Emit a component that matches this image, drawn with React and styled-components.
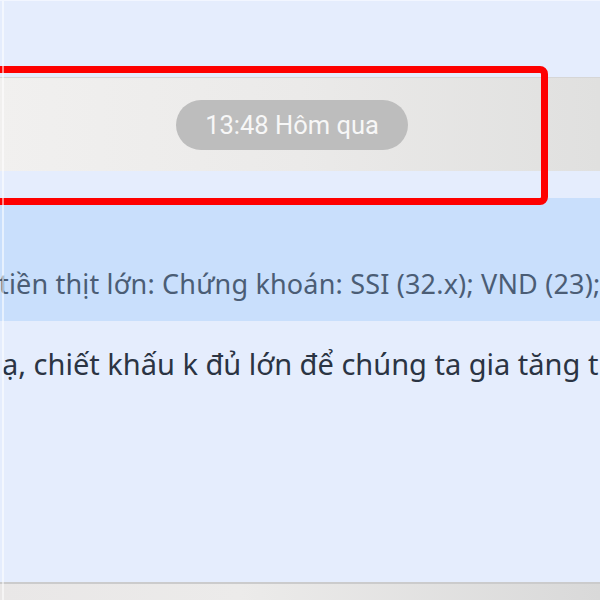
import React from 'react';
import styled, {createGlobalStyle} from 'styled-components';

const GlobalStyle = createGlobalStyle`
  html, body {
    margin: 0;
    padding: 0;
    background: #e5edfd;
  }
`

const Page = styled.div`
  position: relative;
  width: 600px;
  height: 600px;
  overflow: hidden;
  display: flex;
  flex-direction: column;
  background: #e5edfd;
  border-top: 1px solid #f2f6ff;
  box-sizing: border-box;

  &::after {
    content: '';
    position: absolute;
    top: 0;
    bottom: 0;
    left: 2px;
    width: 2px;
    background: rgba(255, 255, 255, 0.55);
  }
`

const TimeStrip = styled.div`
  margin-top: 76px;
  height: 93px;
  display: flex;
  align-items: center;
  justify-content: center;
  padding-right: 16px;
  border-top: 1px solid #d6d6d6;
  background: linear-gradient(to right, #f1f0ef 0%, #ebeae9 50%, #e0e0df 100%);
`

const TimePill = styled.div`
  height: 50px;
  padding: 0 29px;
  border-radius: 25px;
  background: #bdbdbd;
  color: #f7f7f7;
  font-family: Roboto, "Liberation Sans", sans-serif;
  font-size: 25.5px;
  line-height: 50px;
`

const QuoteBand = styled.div`
  margin-top: 27px;
  height: 123px;
  display: flex;
  align-items: flex-end;
  padding-bottom: 19px;
  box-sizing: border-box;
  background: #c9dffc;
`

const Line = styled.div`
  white-space: nowrap;
  font-family: "Noto Sans", "Open Sans", sans-serif;
  font-size: ${props => props.size}px;
  letter-spacing: ${props => props.spacing || 0}px;
  color: ${props => props.tone === 'quote' ? '#4b5d75' : '#2b3443'};
  margin-left: ${props => props.shift}px;
`

const MessageRow = styled.div`
  padding-top: 23px;
  flex: 1;
`

const BottomBar = styled.div`
  height: 16px;
  border-top: 2px solid #cbcbcc;
  background: linear-gradient(to right, #e9e7e7 0%, #ecebea 40%, #d9d9d9 100%);
`

const Highlight = styled.div`
  position: absolute;
  top: 65px;
  left: -20px;
  width: 568px;
  height: 139px;
  box-sizing: border-box;
  border: 7px solid #fe0000;
  border-radius: 8px;
`

export default function App() {
  return (
    <Page>
      <GlobalStyle />
      <TimeStrip>
        <TimePill>13:48 Hôm qua</TimePill>
      </TimeStrip>
      <QuoteBand>
        <Line tone="quote" size={27} spacing={0.18} shift={-1}>
          tiền thịt lớn: Chứng khoán: SSI (32.x); VND (23);
        </Line>
      </QuoteBand>
      <MessageRow>
        <Line size={29} shift={2}>
          ạ, chiết khấu k đủ lớn để chúng ta gia tăng t
        </Line>
      </MessageRow>
      <BottomBar />
      <Highlight />
    </Page>
  );
}
